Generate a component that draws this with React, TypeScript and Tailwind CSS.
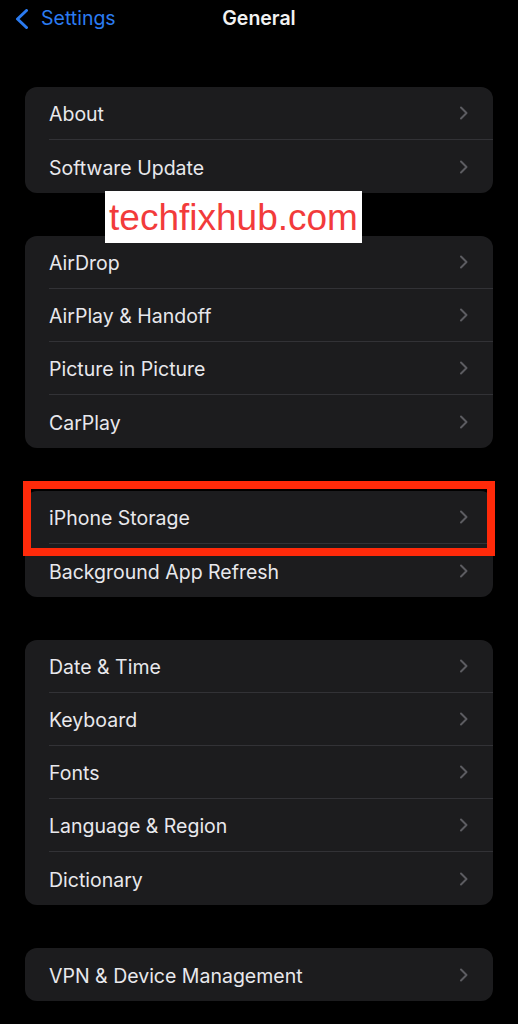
import React from "react";

const groups: string[][] = [
  ["About", "Software Update"],
  ["AirDrop", "AirPlay & Handoff", "Picture in Picture", "CarPlay"],
  ["iPhone Storage", "Background App Refresh"],
  ["Date & Time", "Keyboard", "Fonts", "Language & Region", "Dictionary"],
  ["VPN & Device Management"],
];

const Chevron = () => (
  <svg width="10" height="14" viewBox="0 0 10 14" fill="none">
    <path
      d="M2 1.5L7.5 7L2 12.5"
      stroke="#5c5c61"
      strokeWidth="2"
      strokeLinecap="round"
      strokeLinejoin="round"
    />
  </svg>
);

const Row = ({ label, last }: { label: string; last: boolean }) => (
  <div className="flex h-[53px] items-stretch pl-[24px]">
    <div
      className={
        "flex flex-1 items-center justify-between pr-[24px] " +
        (last ? "" : "border-b border-[#323236]")
      }
    >
      <span className="mt-[4px] text-[19.5px] text-[#e8e8ec]">{label}</span>
      <Chevron />
    </div>
  </div>
);

const App = () => {
  return (
    <div
      className="relative h-[1024px] w-full overflow-hidden bg-black"
      style={{ fontFamily: "Inter, 'Liberation Sans', sans-serif" }}
    >
      {/* nav bar */}
      <div className="relative flex h-[38px] items-center px-[15px]">
        <div className="flex items-center gap-[12px]">
          <svg width="14" height="20" viewBox="0 0 14 20" fill="none">
            <path
              d="M11.5 1.5L2.5 10L11.5 18.5"
              stroke="#2b7bf0"
              strokeWidth="3"
              strokeLinecap="round"
              strokeLinejoin="round"
            />
          </svg>
          <span className="text-[19.5px] text-[#2b7bf0]">Settings</span>
        </div>
        <div className="absolute inset-x-0 top-0 flex h-[38px] items-center justify-center">
          <span className="text-[19.5px] font-semibold text-[#f2f2f2]">General</span>
        </div>
      </div>

      <div className="mt-[49px] flex flex-col gap-[43px] px-[25px]">
        {groups.map((g, gi) => (
          <div key={gi} className="overflow-hidden rounded-[12px] bg-[#1c1c1e]">
            {g.map((label, i) => (
              <Row key={label} label={label} last={i === g.length - 1} />
            ))}
          </div>
        ))}
      </div>

      {/* watermark */}
      <div className="absolute left-[105px] top-[191px] flex h-[52px] w-[257px] items-center justify-center bg-white">
        <span
          className="text-[37px] leading-none text-[#f23b3b]"
          style={{ fontFamily: "'Liberation Sans', Arial, sans-serif" }}
        >
          techfixhub.com
        </span>
      </div>

      {/* highlight box */}
      <div className="absolute left-[23px] top-[481px] h-[75px] w-[472px] border-[8px] border-[#ff2a0a]" />
    </div>
  );
};

export default App;
